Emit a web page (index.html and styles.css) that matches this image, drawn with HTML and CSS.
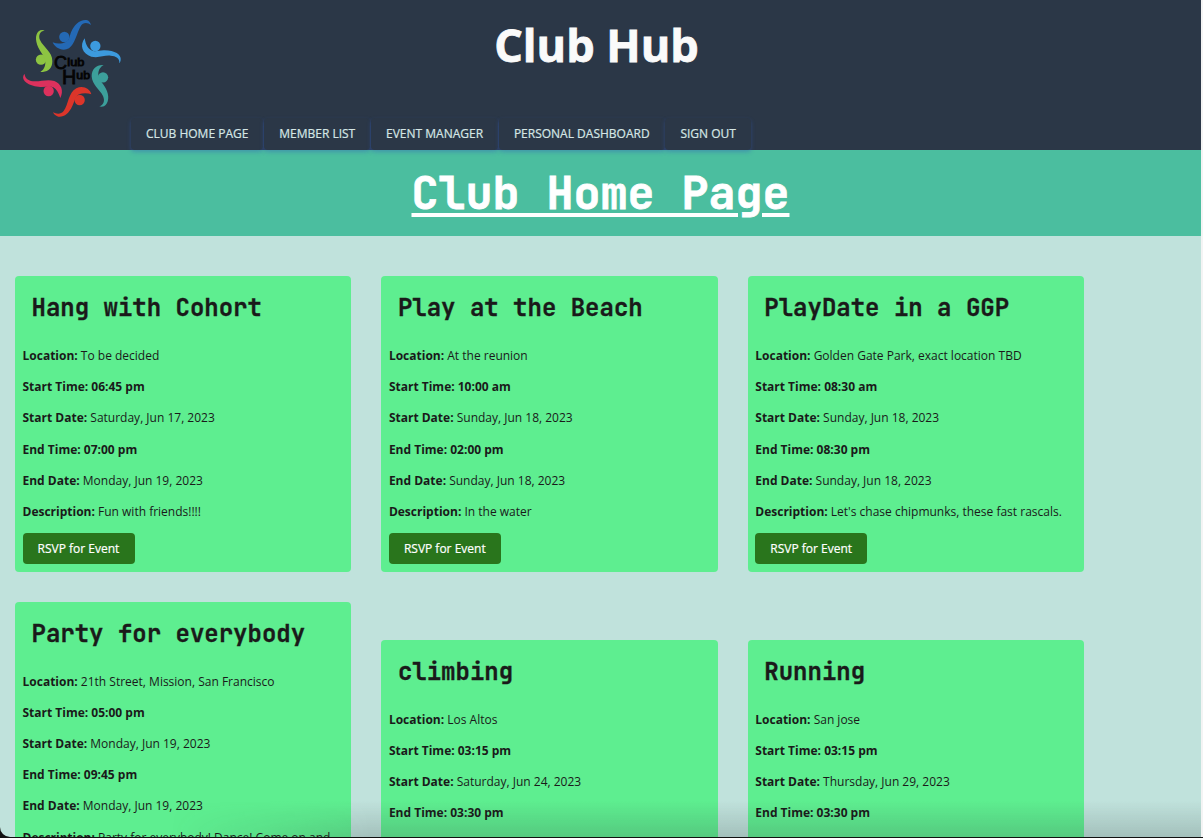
FILE: index.html
```html
<!DOCTYPE html>
<html lang="en">
<head>
<meta charset="utf-8">
<title>Club Hub</title>
<link rel="stylesheet" href="styles.css">
</head>
<body>
<div class="page">
  <header class="header">
    <svg class="logo" viewBox="0 0 420 390" role="img" aria-label="Club Hub">
      <g fill="#2469b5"><circle cx="193" cy="111" r="15.5"/><path d="M158 127C172 133 187 131 197 126C210 120 208 109 213 97C222 74 240 58 259 60C267 61 271 68 273 75C263 67 249 66 242 79C230 100 225 132 207 145C187 156 164 143 158 127Z"/></g>
      <g fill="#3c9ade"><circle cx="286" cy="138" r="15.5"/><path d="M254 115C257 132 262 144 274 151C285 157 298 150 314 151C344 151 365 164 362 180C361 185 360 188 358 190C360 174 347 168 332 167C312 165 297 175 274 170C247 162 238 136 254 115Z"/></g>
      <g fill="#3c9f9b"><circle cx="309" cy="232" r="15.5"/><path d="M311 195C300 201 294 212 295 225C297 240 308 248 317 265C329 286 327 311 312 319C307 321 302 321 298 319C312 315 315 301 309 288C300 269 276 255 275 229C275 205 291 193 311 195Z"/></g>
      <g fill="#dc352a"><circle cx="239" cy="300" r="15.5"/><path d="M274 283C263 279 248 279 237 283C226 289 224 304 217 318C207 340 192 352 175 350C166 348 161 342 159 337C171 343 183 343 191 333C206 313 204 279 229 265C249 255 270 266 274 283Z"/></g>
      <g fill="#dc315d"><circle cx="146" cy="273" r="15.5"/><path d="M181 294C176 279 170 268 160 262C150 256 134 263 115 260C86 258 65 242 70 228C71 225 72 223 74 222C75 237 87 244 105 244C125 244 143 237 163 243C184 251 192 273 181 294Z"/></g>
      <g fill="#8dc442"><circle cx="123" cy="179" r="15.5"/><path d="M121 215C131 211 136 198 136 188C136 173 126 163 119 150C106 128 104 105 116 94C121 90 128 89 134 92C120 92 114 107 120 120C130 142 158 156 157 184C157 205 144 219 121 215Z"/></g>
      <g class="logo-text"><text x="162" y="206" font-size="54">C</text><text x="202" y="198" font-size="31" textLength="51" lengthAdjust="spacingAndGlyphs">lub</text><text x="186" y="253" font-size="59">H</text><text x="229" y="237" font-size="31" textLength="41" lengthAdjust="spacingAndGlyphs">ub</text></g>
    </svg>
    <div class="header-main">
      <h1 class="brand">Club Hub</h1>
      <nav class="nav">
        <a class="tab">CLUB HOME PAGE</a>
        <a class="tab">MEMBER LIST</a>
        <a class="tab">EVENT MANAGER</a>
        <a class="tab">PERSONAL DASHBOARD</a>
        <a class="tab">SIGN OUT</a>
      </nav>
    </div>
  </header>
  <div class="banner"><h2 class="banner-title">Club Home Page</h2></div>
  <main class="events">
    <article class="card">
      <h3 class="card-title">Hang with Cohort</h3>
      <p><b>Location:</b> To be decided</p>
      <p><b>Start Time: 06:45 pm</b></p>
      <p><b>Start Date:</b> Saturday, Jun 17, 2023</p>
      <p><b>End Time: 07:00 pm</b></p>
      <p><b>End Date:</b> Monday, Jun 19, 2023</p>
      <p><b>Description:</b> Fun with friends!!!!</p>
      <button class="rsvp">RSVP for Event</button>
    </article>
    <article class="card">
      <h3 class="card-title">Play at the Beach</h3>
      <p><b>Location:</b> At the reunion</p>
      <p><b>Start Time: 10:00 am</b></p>
      <p><b>Start Date:</b> Sunday, Jun 18, 2023</p>
      <p><b>End Time: 02:00 pm</b></p>
      <p><b>End Date:</b> Sunday, Jun 18, 2023</p>
      <p><b>Description:</b> In the water</p>
      <button class="rsvp">RSVP for Event</button>
    </article>
    <article class="card">
      <h3 class="card-title">PlayDate in a GGP</h3>
      <p><b>Location:</b> Golden Gate Park, exact location TBD</p>
      <p><b>Start Time: 08:30 am</b></p>
      <p><b>Start Date:</b> Sunday, Jun 18, 2023</p>
      <p><b>End Time: 08:30 pm</b></p>
      <p><b>End Date:</b> Sunday, Jun 18, 2023</p>
      <p><b>Description:</b> Let's chase chipmunks, these fast rascals.</p>
      <button class="rsvp">RSVP for Event</button>
    </article>
    <article class="card card-tall">
      <h3 class="card-title">Party for everybody</h3>
      <p><b>Location:</b> 21th Street, Mission, San Francisco</p>
      <p><b>Start Time: 05:00 pm</b></p>
      <p><b>Start Date:</b> Monday, Jun 19, 2023</p>
      <p><b>End Time: 09:45 pm</b></p>
      <p><b>End Date:</b> Monday, Jun 19, 2023</p>
      <p><b>Description:</b> Party for everybody! Dance! Come on and</p>
    </article>
    <article class="card">
      <h3 class="card-title">climbing</h3>
      <p><b>Location:</b> Los Altos</p>
      <p><b>Start Time: 03:15 pm</b></p>
      <p><b>Start Date:</b> Saturday, Jun 24, 2023</p>
      <p><b>End Time: 03:30 pm</b></p>
    </article>
    <article class="card">
      <h3 class="card-title">Running</h3>
      <p><b>Location:</b> San jose</p>
      <p><b>Start Time: 03:15 pm</b></p>
      <p><b>Start Date:</b> Thursday, Jun 29, 2023</p>
      <p><b>End Time: 03:30 pm</b></p>
    </article>
  </main>
  <div class="shade"></div>
</div>
</body>
</html>
```
FILE: styles.css
```css
* { box-sizing: border-box; }
html { background: #f4f4f4; }
body {
  margin: 0;
  height: 838px;
  overflow: hidden;
  background: linear-gradient(#111, #111) bottom / 100% 1px no-repeat, linear-gradient(#111, #111) left bottom / 20px 12px no-repeat;
  font: 12px/19.2px "Open Sans", "Noto Sans", sans-serif;
  color: #1a1a1a;
}
.page {
  position: relative;
  width: 1201px;
  height: 837px;
  overflow: hidden;
  background: #c0e2dc;
  border-bottom-left-radius: 10px;
}
.header { display: flex; height: 150px; background: #2b3747; }
.logo { flex: none; width: 140px; height: 130px; margin-right: -9px; }
.logo-text { font-family: "Liberation Sans", sans-serif; fill: #050505; stroke: #050505; stroke-width: 2.5; }
.header-main { flex: 1; display: flex; flex-direction: column; justify-content: space-between; }
.brand {
  margin: 9px 0 0;
  padding-right: 139px;
  font-size: 45px;
  line-height: 72px;
  text-align: center;
  color: #fafafa;
  -webkit-text-stroke: .8px #fafafa;
}
.nav { display: flex; gap: .8px; position: relative; z-index: 1; }
.tab {
  height: 32px;
  padding: 6px 15px 0;
  border-radius: 4px;
  background: #2b3747;
  box-shadow: 0 2px 4px rgba(50, 93, 190, .4);
  color: #d5e6e5;
  -webkit-text-stroke: .2px #d5e6e5;
}
.banner { height: 86px; padding-top: 7px; background: #4bbe9f; }
.banner-title {
  margin: 0;
  font: bold 45px/72px "JetBrains Mono", "DejaVu Sans Mono", monospace;
  text-align: center;
  text-decoration: underline;
  text-decoration-thickness: 4px;
  text-underline-offset: 4px;
  color: #fff;
  -webkit-text-stroke: .8px #fff;
}
.events {
  display: grid;
  grid-template-columns: repeat(3, 336.4px);
  gap: 29.6px 30px;
  align-items: end;
  padding: 40px 15px 0;
}
.card { height: 296px; padding: 13px 7.5px 0; border-radius: 4px; background: #5eee90; }
.card-tall { height: 334px; }
.card-title {
  margin: 0 0 18.5px;
  padding-left: 9px;
  font: bold 24px/38.4px "JetBrains Mono", "DejaVu Sans Mono", monospace;
  -webkit-text-stroke: .3px #1a1a1a;
}
.card p { margin: 0 0 12px; white-space: nowrap; }
.rsvp {
  display: block;
  height: 31px;
  padding: 0 15.4px 0 15px;
  border: 0;
  border-radius: 4px;
  background: #29751c;
  color: #fff;
  font: 500 12px "Open Sans", sans-serif;
  -webkit-text-stroke: .2px #fff;
}
.shade {
  position: absolute;
  left: 170px;
  right: 0;
  bottom: 0;
  height: 36px;
  background: linear-gradient(transparent, rgba(50, 60, 60, .2));
  mask-image: linear-gradient(to right, transparent, #000 200px);
}
```
